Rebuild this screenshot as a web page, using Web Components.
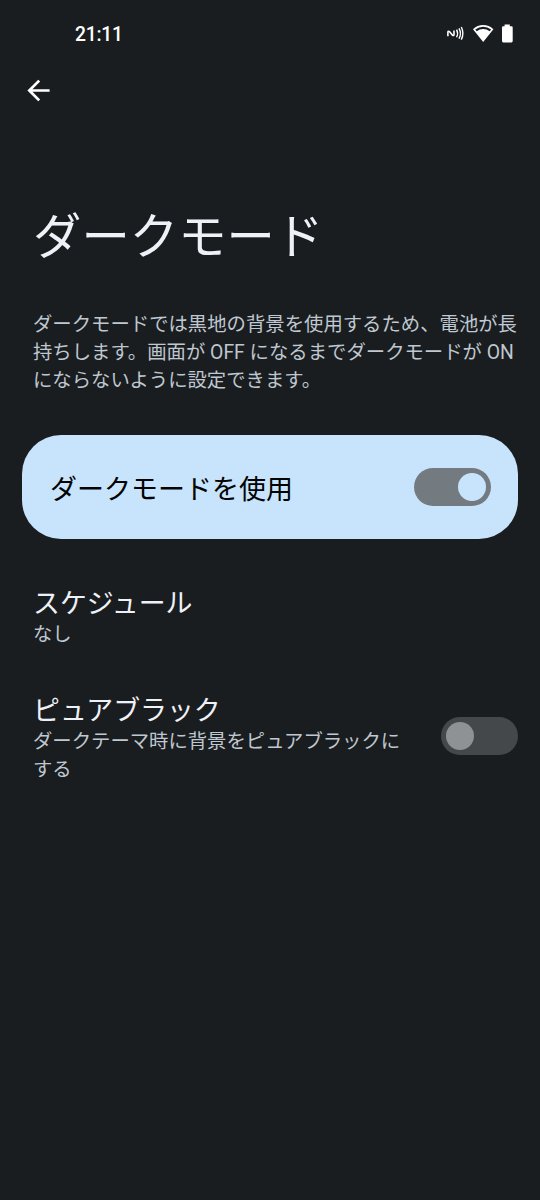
<!DOCTYPE html>
<html lang="ja">
<head>
<meta charset="utf-8">
<title>ダークモード</title>
<style>
  html, body { margin: 0; background: #1a1d1f; }
  body { font-family: Roboto, "Noto Sans CJK JP", sans-serif; color: #eff1f8; }
</style>
</head>
<body>
<settings-screen></settings-screen>
<script>
class BaseElement extends HTMLElement {
  constructor() {
    super();
    this.attachShadow({ mode: "open" }).innerHTML = this.constructor.markup;
  }
}

customElements.define("status-bar", class extends BaseElement {
  static markup = `
    <style>
      :host { display: flex; align-items: center; justify-content: space-between; height: 68px; padding: 0 26px 0 75px; box-sizing: border-box; color: #fff; }
      time { font-size: 19.300px; font-weight: 500; line-height: 24px; letter-spacing: -0.250px; padding-top: 1px; }
      .icons { display: flex; align-items: center; height: 24px; }
      svg { display: block; }
    </style>
    <time>21:11</time>
    <div class="icons">
      <svg width="68" height="24" viewBox="446 22 68 24" fill="#fff">
        <path d="M447.900 36.300V32.200Q448 30.600 449.400 31.600L452.400 35.100Q453.900 36.200 454 34.600V30.600" fill="none" stroke="#fff" stroke-width="1.600"/>
        <path d="M456.6 29.6Q458.6 33.4 456.6 37.3M459 28.3Q461.9 33.4 459 38.6M461.3 27Q464.5 33.4 461.3 39.6" fill="none" stroke="#fff" stroke-width="1.4"/>
        <path fill-rule="evenodd" d="M483.2 42L473 29.2Q477.500 25.100 483.200 25.100T493.400 29.200ZM475.300 29.500L476.700 31.200Q479.700 29.100 483.200 29.100T489.700 31.200L491.100 29.500Q487.500 26.800 483.200 26.800T475.300 29.500Z"/>
        <path d="M504.6 24.600h5.200v1.600h1.600q1.300 0 1.300 1.300v13.600q0 1.300-1.300 1.300h-8.100q-1.300 0-1.300-1.300v-13.600q0-1.300 1.300-1.300h1.300z"/>
      </svg>
    </div>`;
});

customElements.define("back-button", class extends BaseElement {
  static markup = `
    <style>
      :host { display: flex; align-items: center; height: 46px; padding-left: 27px; }
      button { border: 0; padding: 0; background: none; }
      svg { display: block; }
    </style>
    <button aria-label="戻る">
      <svg width="24" height="24" viewBox="0 0 24 24" fill="none" stroke="#fff" stroke-width="2.700"><path d="M22.600 11.500H3M12.200 1.600L2.300 11.500L12.200 21.400"/></svg>
    </button>`;
});

customElements.define("toggle-switch", class extends BaseElement {
  static markup = `
    <style>
      :host { display: flex; align-items: center; flex: none; box-sizing: border-box; width: 77px; height: 38.500px; padding: 0 5px; border-radius: 20px; background: #45484b; }
      i { display: block; width: 28px; height: 28px; border-radius: 50%; background: #8e9294; }
      :host([checked]) { justify-content: flex-end; background: #737a80; }
      :host([checked]) i { background: #c8e4fd; }
    </style><i></i>`;
});

customElements.define("main-switch", class extends BaseElement {
  static markup = `
    <style>
      :host { display: flex; align-items: center; justify-content: space-between; box-sizing: border-box; height: 103.500px; padding: 0 27.500px 0 28px; border-radius: 39px; background: #c8e4fd; color: #020303; font-size: 27px; line-height: 40px; }
      span { padding-top: 5px; }
    </style>
    <span><slot></slot></span><toggle-switch checked></toggle-switch>`;
});

customElements.define("preference-row", class extends BaseElement {
  static markup = `
    <style>
      :host { display: flex; align-items: center; justify-content: space-between; padding-left: 33px; padding-right: 22px; white-space: nowrap; }
      .title { font-size: 26.900px; line-height: 36px; padding-top: 1px; margin-bottom: -1px; }
      .summary { font-size: 19.350px; line-height: 28px; color: #bfc7d0; }
      ::slotted(toggle-switch) { margin-bottom: 5px; }
    </style>
    <div><div class="title"><slot name="title"></slot></div><div class="summary"><slot></slot></div></div>
    <slot name="control"></slot>`;
});

customElements.define("settings-screen", class extends BaseElement {
  static markup = `
    <style>
      :host { display: block; width: 540px; height: 1200px; background: #1a1d1f; overflow: hidden; }
      h1 { margin: 89px 0 0 33px; font-size: 48.400px; line-height: 70px; font-weight: 400; }
      p { margin: 38px 0 0 33px; font-size: 19.380px; line-height: 28px; color: #bfc7d0; white-space: nowrap; }
      main-switch { margin: 40.300px 22px 0; }
      .schedule { margin-top: 46.400px; }
      .black { margin-top: 43.300px; }
    </style>
    <status-bar></status-bar>
    <back-button></back-button>
    <h1>ダークモード</h1>
    <p>ダークモードでは黒地の背景を使用するため、電池が長<br>持ちします。画面が OFF になるまでダークモードが ON<br>にならないように設定できます。</p>
    <main-switch>ダークモードを使用</main-switch>
    <preference-row class="schedule"><span slot="title">スケジュール</span>なし</preference-row>
    <preference-row class="black"><span slot="title">ピュアブラック</span>ダークテーマ時に背景をピュアブラックに<br>する<toggle-switch slot="control"></toggle-switch></preference-row>`;
});
</script>
</body>
</html>
